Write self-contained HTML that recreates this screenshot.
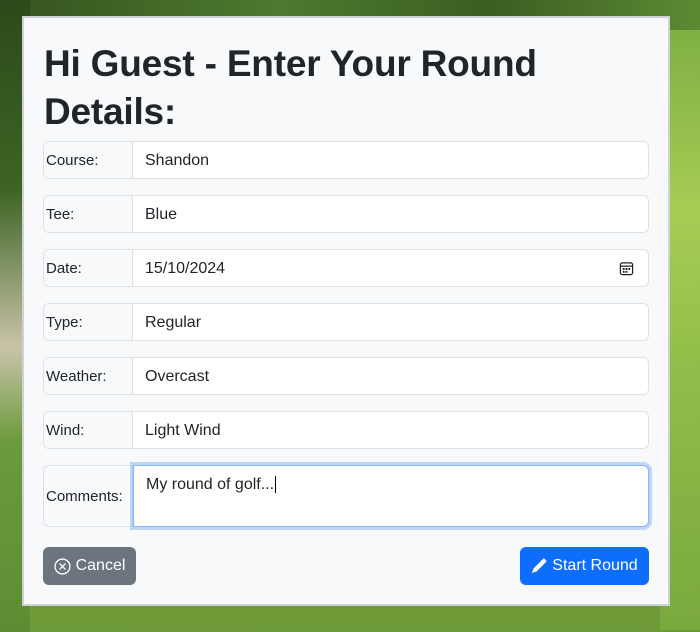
<!DOCTYPE html>
<html><head><style>
*{box-sizing:border-box;margin:0;padding:0}
body{width:700px;height:632px;overflow:hidden;position:relative;font-family:"Liberation Sans",sans-serif;
background:linear-gradient(180deg,#2d4a1c 0%,#3f6a26 8%,#6a9a3a 25%,#86b24a 50%,#7aa640 75%,#6d9a38 100%);}
.bg1{position:absolute;left:0;top:0;width:700px;height:60px;background:linear-gradient(90deg,#34531f,#4d7a2e 40%,#3a5e22 70%,#5c8a33);}
.bg2{position:absolute;left:0;top:0;width:30px;height:632px;background:linear-gradient(180deg,#2c4a1a 0%,#3d6424 30%,#c9c3a8 55%,#6b9a3c 70%,#5e8c34 100%);}
.bg3{position:absolute;right:0;top:30px;width:40px;height:600px;background:linear-gradient(180deg,#7fb043 0%,#a6cc55 30%,#8dbc48 60%,#7aa93e 100%);}
.card{position:absolute;left:22px;top:16px;width:648px;height:590px;background:#f8f9fa;border:2px solid #cfd2d4;}
h1{position:absolute;left:20px;top:22px;font-size:37px;line-height:48px;font-weight:bold;color:#212529;letter-spacing:-0.2px}
.row{position:absolute;left:19px;width:606px;height:38px;display:flex;border:1px solid #dee2e6;border-radius:6px;overflow:hidden;background:#fff}
.lab{width:89px;background:#f8f9fa;border-right:1px solid #dee2e6;font-size:15px;color:#212529;display:flex;align-items:center;padding-left:2px}
.val{flex:1;font-size:16px;color:#212529;display:flex;align-items:center;padding-left:12px;padding-top:2px;position:relative}
.btn{position:absolute;top:529px;height:38px;border-radius:6px;color:#fff;font-size:16px;display:flex;align-items:center;justify-content:center;gap:5px}
</style></head><body>
<div class="bg1"></div><div class="bg2"></div><div class="bg3"></div>
<div class="card">
<h1>Hi Guest - Enter Your Round<br>Details:</h1>
<div class="row" style="top:123px"><div class="lab">Course:</div><div class="val">Shandon</div></div>
<div class="row" style="top:177px"><div class="lab">Tee:</div><div class="val">Blue</div></div>
<div class="row" style="top:231px"><div class="lab">Date:</div><div class="val">15/10/2024
<svg style="position:absolute;right:14px;top:11px" width="15" height="15" viewBox="0 0 16 16"><rect x="1.5" y="2" width="13" height="12.5" rx="2" fill="none" stroke="#222" stroke-width="1.3"/><line x1="1.5" y1="5.5" x2="14.5" y2="5.5" stroke="#222" stroke-width="1.3"/><g fill="#222"><rect x="4" y="7.5" width="2" height="2"/><rect x="7" y="7.5" width="2" height="2"/><rect x="10" y="7.5" width="2" height="2"/><rect x="4" y="10.5" width="2" height="2"/><rect x="7" y="10.5" width="2" height="2"/></g></svg></div></div>
<div class="row" style="top:285px"><div class="lab">Type:</div><div class="val">Regular</div></div>
<div class="row" style="top:339px"><div class="lab">Weather:</div><div class="val">Overcast</div></div>
<div class="row" style="top:393px"><div class="lab">Wind:</div><div class="val">Light Wind</div></div>
<div class="row" style="top:447px;height:62px;overflow:visible;background:transparent;border:none">
<div class="lab" style="border:1px solid #dee2e6;border-radius:6px 0 0 6px;width:90px">Comments:</div>
<div style="flex:1;background:#fff;border:1px solid #86b7fe;box-shadow:0 0 0 3px rgba(13,110,253,.25);font-size:16px;color:#212529;padding:10px 12px;border-radius:0 6px 6px 0">My round of golf...<span style="border-left:1px solid #000;margin-left:1px"></span></div></div>
<div class="btn" style="left:19px;width:93px;background:#6c757d"><svg width="17" height="17" viewBox="0 0 16 16"><circle cx="8" cy="8" r="7" fill="none" stroke="#fff" stroke-width="1.2"/><path d="M5.2 5.2L10.8 10.8M10.8 5.2L5.2 10.8" stroke="#fff" stroke-width="1.2"/></svg>Cancel</div>
<div class="btn" style="left:496px;width:129px;background:#0d6efd"><svg width="16" height="16" viewBox="0 0 16 16"><path d="M12.1.9a1 1 0 0 1 1.4 0l1.6 1.6a1 1 0 0 1 0 1.4L5.5 13.5 1 15l1.5-4.5z" fill="#fff"/></svg>Start Round</div>
</div>
</body></html>
